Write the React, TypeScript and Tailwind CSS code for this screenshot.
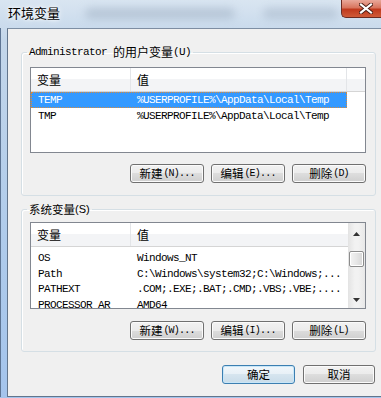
import React from "react";

const mono = "font-['Liberation_Mono',monospace] text-[11px] tracking-[-0.6px]";
const cjk = "font-['Noto_Sans_CJK_SC',sans-serif]";

function Btn({ cn, latin, def, w }: { cn: string; latin?: string; def?: boolean; w: string }) {
  return (
    <div
      className={`h-[19px] ${w} shrink-0 rounded-[3px] border flex items-center justify-center text-black ${
        def
          ? "border-[#3c7fb1] bg-[linear-gradient(#f1f7fb_0%,#e7f0f6_50%,#d6e5ef_50%,#c9dce9_100%)] shadow-[inset_0_0_0_1px_#c8e6f8]"
          : "border-[#707070] bg-[linear-gradient(#f2f2f2_0%,#ebebeb_50%,#dddddd_50%,#cfcfcf_100%)] shadow-[inset_0_0_0_1px_#fbfbfb]"
      }`}
    >
      <span className={`${cjk} text-[11.5px] leading-none`}>{cn}</span>
      {latin && (
        <span className="font-['Liberation_Mono',monospace] text-[10px] tracking-[-0.8px] leading-none ml-[1px]">
          {latin}
        </span>
      )}
    </div>
  );
}

function Row({ a, b, sel, h }: { a: string; b: string; sel?: boolean; h: string }) {
  return (
    <div
      className={`flex ${h} shrink-0 w-[316px] items-center border ${
        sel ? "bg-[#3399ff] text-white border-dotted border-[#d98a3a]" : "border-transparent text-black"
      }`}
    >
      <div className={`w-[99px] pl-[6px] ${mono} leading-none whitespace-nowrap`}>{a}</div>
      <div className={`flex-1 pl-[6px] ${mono} leading-none whitespace-nowrap`}>{b}</div>
    </div>
  );
}

function Header({ full }: { full?: boolean }) {
  return (
    <div className="flex h-[24px] shrink-0 border-b border-[#d5d5d5] bg-[linear-gradient(#ffffff_0%,#ffffff_50%,#f3f4f6_50%,#f3f4f6_100%)]">
      <div className={`w-[100px] border-r border-[#e3e5e8] pl-[6px] flex items-center ${cjk} text-[12px] text-black`}>变量</div>
      <div className={`${full ? "flex-1" : "w-[216px] border-r border-[#e3e5e8]"} pl-[6px] flex items-center ${cjk} text-[12px] text-black`}>值</div>
      {!full && <div className="flex-1" />}
    </div>
  );
}

export default function App() {
  return (
    <div className="w-[381px] h-[398px] overflow-hidden flex flex-col bg-[linear-gradient(180deg,#d9e5f1_0%,#c3d6ea_10%,#afcbeb_60%,#a4c4ec_100%)]">
      {/* title bar */}
      <div className="h-[28px] shrink-0 flex items-start">
        <div className={`pl-[8px] pt-[5px] ${cjk} text-[13px] leading-[16px] text-black [text-shadow:0_0_6px_#fff,0_0_3px_#fff]`}>环境变量</div>
        <div className="ml-[25px] mt-[8px] h-[11px] w-[150px] rounded-full bg-[#9cadc0] opacity-50 blur-[4px]" />
        <div className="ml-[28px] mt-[8px] h-[11px] w-[75px] rounded-full bg-[#9cadc0] opacity-45 blur-[4px]" />
        <div className="flex-1" />
        <div className="w-[40px] h-[18px] shrink-0 rounded-bl-[5px] border-l border-b border-[#6b2a20] bg-[linear-gradient(180deg,#e9a89a_0%,#d8755e_45%,#c0391d_55%,#cf5b38_100%)] flex items-center pl-[17px]">
          <svg width="14" height="11" viewBox="0 0 14 11">
            <path d="M2 1.5 L12 9.5 M12 1.5 L2 9.5" stroke="#4a1c14" strokeWidth="4" strokeLinecap="square" />
            <path d="M2 1.5 L12 9.5 M12 1.5 L2 9.5" stroke="#ffffff" strokeWidth="2.2" strokeLinecap="square" />
          </svg>
        </div>
      </div>

      <div className="flex flex-1 min-h-0">
        <div className="w-[7px] shrink-0 border-l border-[#5e7594]" />
        <div className="flex-1 flex flex-col bg-[#f0f0f0] border-l border-t border-b border-l-[#62758c] border-t-[#7d8ea3] border-b-[#62758c]">
          {/* group 1 */}
          <fieldset className="ml-[13px] mt-[17px] w-[355px] rounded-[3px] border border-[#d5dfe5] shadow-[inset_1px_1px_0_#ffffff]">
            <legend className="ml-[5px] px-[2px] h-[12px] flex items-center text-black whitespace-nowrap">
              <span className={`${mono} leading-[12px]`}>Administrator&nbsp;</span>
              <span className={`${cjk} text-[12px] leading-[12px]`}>的用户变量</span>
              <span className={`${mono} leading-[12px]`}>(U)</span>
            </legend>
            <div className="pl-[8px] pr-[9px] pt-[9px] pb-[12px] flex flex-col">
              <div className="w-[336px] h-[86px] border border-[#828790] bg-white flex flex-col overflow-hidden">
                <Header />
                <Row h="h-[16px]" a="TEMP" b="%USERPROFILE%\AppData\Local\Temp" sel />
                <Row h="h-[16px]" a="TMP" b="%USERPROFILE%\AppData\Local\Temp" />
              </div>
              <div className="mt-[11px] flex justify-end gap-[7px]">
                <Btn cn="新建" latin="(N)..." w="w-[74px]" />
                <Btn cn="编辑" latin="(E)..." w="w-[74px]" />
                <Btn cn="删除" latin="(D)" w="w-[74px]" />
              </div>
            </div>
          </fieldset>

          {/* group 2 */}
          <fieldset className="ml-[13px] mt-[7px] w-[355px] rounded-[3px] border border-[#d5dfe5] shadow-[inset_1px_1px_0_#ffffff]">
            <legend className="ml-[5px] px-[2px] h-[12px] flex items-center text-black whitespace-nowrap">
              <span className={`${cjk} text-[11.5px] leading-[12px]`}>系统变量</span>
              <span className="font-['Liberation_Sans',sans-serif] text-[11px] leading-[12px]">(S)</span>
            </legend>
            <div className="pl-[8px] pr-[9px] pt-[7px] pb-[11px] flex flex-col">
              <div className="w-[336px] h-[87px] border border-[#828790] bg-white flex overflow-hidden">
                <div className="flex-1 flex flex-col overflow-hidden">
                  <Header full />
                  <div className="pt-[4px] flex flex-col">
                    <Row h="h-[15.5px]" a="OS" b="Windows_NT" />
                    <Row h="h-[15.5px]" a="Path" b="C:\Windows\system32;C:\Windows;..." />
                    <Row h="h-[15.5px]" a="PATHEXT" b=".COM;.EXE;.BAT;.CMD;.VBS;.VBE;...." />
                    <Row h="h-[15.5px]" a="PROCESSOR_AR" b="AMD64" />
                  </div>
                </div>
                <div className="w-[17px] shrink-0 flex flex-col items-center bg-[linear-gradient(90deg,#e3e3e3,#f2f2f2_40%,#f2f2f2_60%,#e8e8e8)]">
                  <div className="h-[17px] w-full flex items-center justify-center mt-[2px]">
                    <svg width="7" height="4" viewBox="0 0 7 4"><path d="M0 4 L3.5 0 L7 4Z" fill="#333" /></svg>
                  </div>
                  <div className="mt-[9px] h-[16px] w-[15px] rounded-[2px] border border-[#8c8c8c] bg-[linear-gradient(90deg,#f3f3f3,#e6e6e6_50%,#d6d6d6)] shadow-[inset_0_0_0_1px_#ffffff]" />
                  <div className="flex-1" />
                  <div className="h-[17px] w-full flex items-center justify-center">
                    <svg width="7" height="4" viewBox="0 0 7 4"><path d="M0 0 L3.5 4 L7 0Z" fill="#333" /></svg>
                  </div>
                </div>
              </div>
              <div className="mt-[12px] flex justify-end gap-[7px]">
                <Btn cn="新建" latin="(W)..." w="w-[74px]" />
                <Btn cn="编辑" latin="(I)..." w="w-[74px]" />
                <Btn cn="删除" latin="(L)" w="w-[74px]" />
              </div>
            </div>
          </fieldset>

          <div className="mt-[13px] pr-[6px] flex justify-end gap-[8px]">
            <Btn cn="确定" def w="w-[73px]" />
            <Btn cn="取消" w="w-[72px]" />
          </div>
        </div>
      </div>
      <div className="h-[1px] shrink-0" />
    </div>
  );
}
